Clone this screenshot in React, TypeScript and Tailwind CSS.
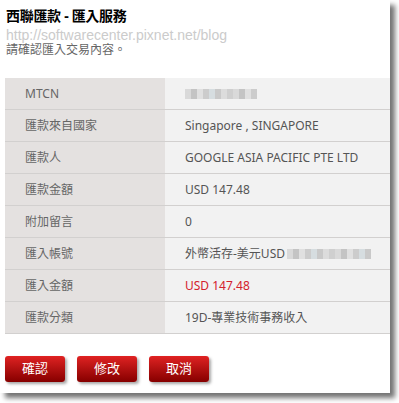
import React from "react";

const cjk = { fontFamily: '"Noto Sans", "Noto Sans CJK TC", sans-serif' };

function Blur({ w }: { w: number }) {
  // pixelated block standing in for masked numbers
  const shades = ["#d9d9d9", "#c9c9c9", "#e0e0e0", "#cfcfcf", "#d6dde0", "#c4c4c4", "#dcdcdc", "#cccccc"];
  const n = Math.round(w / 6);
  return (
    <span className="inline-flex h-[10px] align-middle">
      {Array.from({ length: n }).map((_, i) => (
        <span key={i} className="h-full" style={{ width: 6, background: shades[(i * 5) % shades.length] }} />
      ))}
    </span>
  );
}

const rows: { label: string; value: React.ReactNode; red?: boolean }[] = [
  { label: "MTCN", value: <Blur w={70} /> },
  { label: "匯款來自國家", value: "Singapore , SINGAPORE" },
  { label: "匯款人", value: "GOOGLE ASIA PACIFIC PTE LTD" },
  { label: "匯款金額", value: "USD 147.48" },
  { label: "附加留言", value: "0" },
  {
    label: "匯入帳號",
    value: (
      <span className="flex items-center">
        外幣活存-美元USD
        <span className="ml-[2px]">
          <Blur w={84} />
        </span>
      </span>
    ),
  },
  { label: "匯入金額", value: "USD 147.48", red: true },
  { label: "匯款分類", value: "19D-專業技術事務收入" },
];

export default function App() {
  return (
    <div className="w-[399px] h-[403px] bg-white overflow-hidden">
      <div className="w-[390px] h-[393px] bg-white shadow-[5px_5px_5px_rgba(0,0,0,0.55)] flex flex-col">
        <div className="pl-[6px] pt-[6px]">
          <h1 className="text-[14px] font-bold text-black leading-[20px] tracking-[-0.3px]" style={cjk}>
            西聯匯款 - 匯入服務
          </h1>
          <div
            className="text-[14px] leading-[15px] text-[#cbcbcb] mt-[2px]"
            style={{ fontFamily: '"Liberation Sans", Arial, sans-serif' }}
          >
            http://softwarecenter.pixnet.net/blog
          </div>
          <div className="text-[12px] leading-[13px] text-[#666]" style={cjk}>
            請確認匯入交易內容。
          </div>
        </div>

        <div className="ml-[5px] mt-[22px] w-[385px] text-[12px]" style={cjk}>
          {rows.map((r) => (
            <div key={r.label} className="flex h-[32px] border-b border-[#d2d0cf]">
              <div className="w-[160px] bg-[#e4e1e0] pl-[20px] flex items-center text-[#666]">{r.label}</div>
              <div
                className={`flex-1 bg-[#f2f2f2] pl-[20px] flex items-center ${r.red ? "text-[#d4202c]" : "text-[#555]"}`}
              >
                {r.value}
              </div>
            </div>
          ))}
        </div>

        <div className="flex gap-[12px] ml-[5px] mt-[22px]">
          {["確認", "修改", "取消"].map((t) => (
            <button
              key={t}
              className="w-[60px] h-[26px] rounded-[3px] text-white text-[13px] bg-gradient-to-b from-[#e02222] to-[#860000] shadow-[2px_2px_3px_rgba(0,0,0,0.35)]"
              style={cjk}
            >
              {t}
            </button>
          ))}
        </div>
      </div>
    </div>
  );
}
